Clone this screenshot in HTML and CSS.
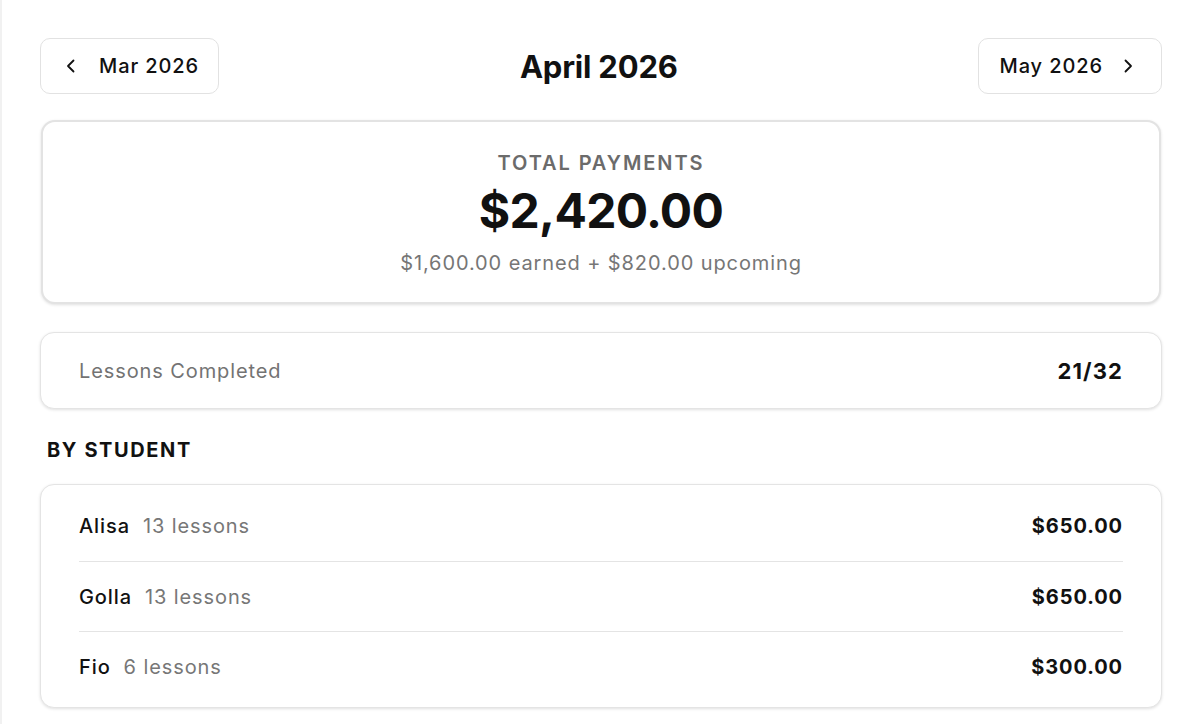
FILE: index.html
```html
<!DOCTYPE html>
<html lang="en">
<head>
<meta charset="utf-8">
<title>April 2026</title>
<link rel="stylesheet" href="styles.css">
</head>
<body>
<div class="page">
  <header class="nav">
    <button class="nav-btn prev">
      <svg class="chev" viewBox="0 0 16 16" width="16" height="16"><path d="M10.5 2.5 L5 8 L10.5 13.5" fill="none" stroke="#111" stroke-width="1.8" stroke-linecap="round" stroke-linejoin="round"/></svg>
      <span>Mar 2026</span>
    </button>
    <h1 class="title">April 2026</h1>
    <button class="nav-btn next">
      <span>May 2026</span>
      <svg class="chev" viewBox="0 0 16 16" width="16" height="16"><path d="M5.5 2.5 L11 8 L5.5 13.5" fill="none" stroke="#111" stroke-width="1.8" stroke-linecap="round" stroke-linejoin="round"/></svg>
    </button>
  </header>

  <section class="card total">
    <div class="total-label">TOTAL PAYMENTS</div>
    <div class="total-amount">$2,420.00</div>
    <div class="total-sub">$1,600.00 earned + $820.00 upcoming</div>
  </section>

  <section class="card lessons">
    <span class="lessons-label">Lessons Completed</span>
    <span class="lessons-value">21/32</span>
  </section>

  <h2 class="section-title">BY STUDENT</h2>

  <section class="card students">
    <div class="row">
      <div class="who"><span class="name">Alisa</span><span class="count">13 lessons</span></div>
      <span class="amount">$650.00</span>
    </div>
    <div class="row">
      <div class="who"><span class="name">Golla</span><span class="count">13 lessons</span></div>
      <span class="amount">$650.00</span>
    </div>
    <div class="row">
      <div class="who"><span class="name">Fio</span><span class="count">6 lessons</span></div>
      <span class="amount">$300.00</span>
    </div>
  </section>
</div>
</body>
</html>
```

FILE: styles.css
```css
* { box-sizing: border-box; }
html, body { margin: 0; padding: 0; background: #fff; }
body {
  font-family: Inter, "Noto Sans", "Liberation Sans", sans-serif;
  color: #111;
  border-left: 2px solid #f1f1f1;
  min-height: 724px;
  letter-spacing: 0.9px;
}
.page {
  width: 1122px;
  margin-left: 38px;
  padding-top: 38px;
  display: flex;
  flex-direction: column;
}
.nav {
  display: flex;
  align-items: center;
  justify-content: space-between;
  height: 56px;
}
.nav-btn {
  height: 56px;
  display: flex;
  align-items: center;
  background: #fff;
  border: 1px solid #e2e2e2;
  border-radius: 10px;
  font-family: inherit;
  font-size: 20px;
  font-weight: 500;
  letter-spacing: 0.9px;
  color: #111;
}
.nav-btn.prev { padding: 0 19px 0 22px; gap: 20px; }
.nav-btn.next { padding: 0 25px 0 20px; gap: 17px; }
.chev { flex: none; }
.title {
  margin: 0;
  font-size: 31px;
  font-weight: 700;
  letter-spacing: -0.2px;
}
.card {
  background: #fff;
  border: 1px solid #e4e4e4;
  border-radius: 14px;
  box-shadow: 0 1px 3px rgba(0,0,0,0.12);
}
.total {
  margin-top: 26px;
  margin-left: 1px;
  margin-right: 1px;
  height: 184px;
  border: 2px solid #e3e3e3;
  display: flex;
  flex-direction: column;
  align-items: center;
  padding-top: 27px;
}
.total-label {
  font-size: 20px;
  font-weight: 600;
  color: #6b6b6b;
  letter-spacing: 1.9px;
  line-height: 28px;
}
.total-amount {
  font-size: 48px;
  font-weight: 700;
  line-height: 58px;
  margin-top: 5px;
  letter-spacing: -0.7px;
}
.total-sub {
  font-size: 20px;
  color: #767676;
  line-height: 28px;
  margin-top: 9px;
}
.lessons {
  margin-top: 28px;
  height: 77px;
  display: flex;
  align-items: center;
  justify-content: space-between;
  padding: 0 38px;
}
.lessons-label { font-size: 20px; color: #737373; }
.lessons-value { font-size: 22px; font-weight: 700; letter-spacing: 1.1px; }
.section-title {
  margin: 27px 0 0 7px;
  font-size: 20px;
  font-weight: 700;
  letter-spacing: 1.6px;
  line-height: 28px;
}
.students {
  margin-top: 20px;
  padding: 6px 38px;
}
.row {
  height: 70px;
  display: flex;
  align-items: center;
  justify-content: space-between;
}
.row + .row { border-top: 1px solid #e4e4e4; }
.who { display: flex; align-items: baseline; gap: 13px; }
.name { font-size: 20px; font-weight: 500; }
.count { font-size: 20px; color: #777; }
.amount { font-size: 20px; font-weight: 700; }
```
